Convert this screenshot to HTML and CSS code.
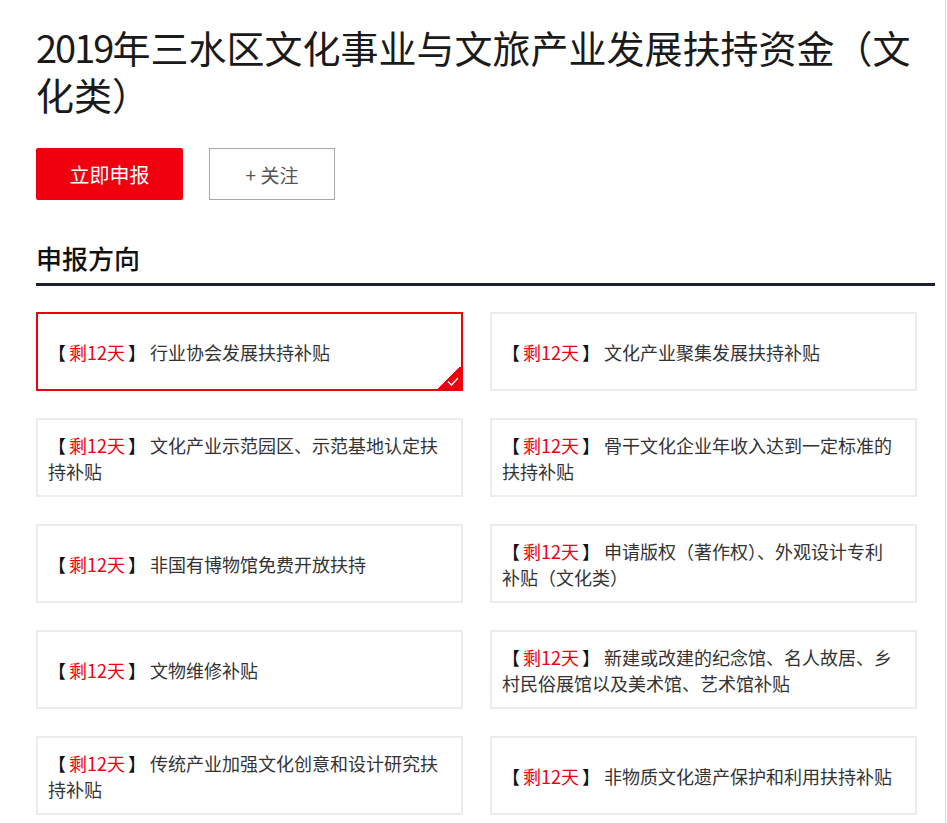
FILE: index.html
```html
<!DOCTYPE html>
<html lang="zh-CN">
<head>
  <meta charset="UTF-8" />
  <meta name="viewport" content="width=device-width, initial-scale=1.0" />
  <title>2019年三水区文化事业与文旅产业发展扶持资金（文化类）</title>
  <link rel="stylesheet" href="styles.css">
</head>
<body>
  <div class="page">
    <div class="container">
      <h1 class="title"><span class="year">2019</span>年三水区文化事业与文旅产业发展扶持资金（文化类）</h1>

      <!-- Actions -->
      <div class="actions">
        <button class="apply-btn">立即申报</button>
        <button class="follow-btn">+ 关注</button>
      </div>

      <!-- Directions -->
      <h2 class="section-title">申报方向</h2>

      <div class="grid">
        <div class="card active">
          <p><span class="br">【</span><span class="days">剩12天</span><span class="br">】</span> 行业协会发展扶持补贴</p>
          <span class="corner">
            <svg width="12" height="9" viewBox="0 0 12 9"><path d="M1 4.5 L4.5 8 L11 1" fill="none" stroke="#fff" stroke-width="1.4"/></svg>
          </span>
        </div>
        <div class="card">
          <p><span class="br">【</span><span class="days">剩12天</span><span class="br">】</span> 文化产业聚集发展扶持补贴</p>
        </div>
        <div class="card">
          <p><span class="br">【</span><span class="days">剩12天</span><span class="br">】</span> 文化产业示范园区、示范基地认定扶持补贴</p>
        </div>
        <div class="card">
          <p><span class="br">【</span><span class="days">剩12天</span><span class="br">】</span> 骨干文化企业年收入达到一定标准的扶持补贴</p>
        </div>
        <div class="card">
          <p><span class="br">【</span><span class="days">剩12天</span><span class="br">】</span> 非国有博物馆免费开放扶持</p>
        </div>
        <div class="card">
          <p><span class="br">【</span><span class="days">剩12天</span><span class="br">】</span> 申请版权（著作权）、外观设计专利补贴（文化类）</p>
        </div>
        <div class="card">
          <p><span class="br">【</span><span class="days">剩12天</span><span class="br">】</span> 文物维修补贴</p>
        </div>
        <div class="card">
          <p><span class="br">【</span><span class="days">剩12天</span><span class="br">】</span> 新建或改建的纪念馆、名人故居、乡村民俗展馆以及美术馆、艺术馆补贴</p>
        </div>
        <div class="card">
          <p><span class="br">【</span><span class="days">剩12天</span><span class="br">】</span> 传统产业加强文化创意和设计研究扶持补贴</p>
        </div>
        <div class="card">
          <p><span class="br">【</span><span class="days">剩12天</span><span class="br">】</span> 非物质文化遗产保护和利用扶持补贴</p>
        </div>
      </div>
    </div>
  </div>
</body>
</html>
```

FILE: styles.css
```css
body {
  font-family: "Noto Sans CJK SC", "Noto Sans", sans-serif;
  background-color: #fff;
  color: #222;
  margin: 0;
  padding: 0;
}

.page {
  width: 945px;
  min-height: 823px;
  border-right: 1px solid #dcdcdc;
}

.container {
  width: 899px;
  margin-left: 36px;
  padding-top: 23px;
}

.title {
  margin: 0;
  padding-right: 12px;
  font-size: 38px;
  line-height: 47px;
  font-weight: normal;
  color: #1a1a1a;
}

.title .year {
  letter-spacing: -2px;
}

.actions {
  display: flex;
  gap: 26px;
  margin-top: 31px;
}

.apply-btn {
  width: 147px;
  height: 52px;
  background-color: #f0000f;
  color: #fff;
  border: none;
  border-radius: 2px;
  font-family: inherit;
  font-size: 20px;
  cursor: pointer;
}

.follow-btn {
  width: 126px;
  height: 52px;
  background: #fff;
  color: #555;
  border: 1px solid #a8a8a8;
  font-family: inherit;
  font-size: 19px;
  cursor: pointer;
}

.section-title {
  margin: 40px 0 0;
  padding-bottom: 7px;
  font-size: 26px;
  font-weight: 500;
  line-height: 36px;
  color: #111;
  border-bottom: 3px solid #1c2030;
}

.grid {
  display: grid;
  grid-template-columns: 427px 427px;
  gap: 27px;
  margin-top: 26px;
}

.card {
  position: relative;
  height: 79px;
  box-sizing: border-box;
  border: 2px solid #ececec;
  padding: 0 16px 0 10px;
  display: flex;
  align-items: center;
}

.card.active {
  border-color: #f0000f;
}

.card p {
  margin: 0;
  font-size: 18px;
  line-height: 26px;
  color: #333;
}

.card .br {
  color: #111;
}

.card .days {
  margin: 0 3px;
  color: #f0000f;
}

.corner {
  position: absolute;
  right: 0;
  bottom: 0;
  width: 24px;
  height: 22px;
  background: linear-gradient(135deg, transparent 50%, #f0000f 50%);
}

.corner svg {
  position: absolute;
  right: 2px;
  bottom: 3px;
}
```
